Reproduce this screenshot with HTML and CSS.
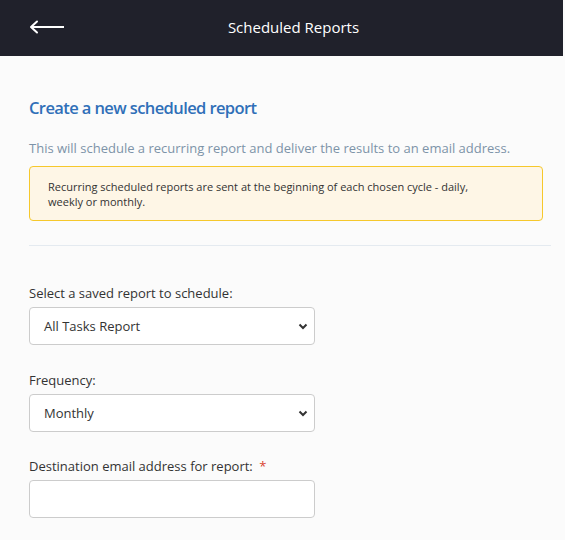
FILE: index.html
```html
<!DOCTYPE html>
<html>
<head>
<meta charset="utf-8">
<link rel="stylesheet" href="styles.css">
</head>
<body>
<div class="app">
  <header class="topbar">
    <a class="back" aria-label="Back">
      <svg width="36" height="14" viewBox="0 0 36 14"><path d="M8 1.5 L2 7 L8 12.5" fill="none" stroke="#fff" stroke-width="2" stroke-linecap="round" stroke-linejoin="round"/><path d="M2.5 7 H35" stroke="#fff" stroke-width="2"/></svg>
    </a>
    <h1 class="topbar-title">Scheduled Reports</h1>
  </header>
  <main class="content">
    <h2 class="heading">Create a new scheduled report</h2>
    <p class="intro">This will schedule a recurring report and deliver the results to an email address.</p>
    <div class="alert">Recurring scheduled reports are sent at the beginning of each chosen cycle - daily, weekly or monthly.</div>
    <hr class="divider">
    <div class="field field-first">
      <label class="label">Select a saved report to schedule:</label>
      <div class="select">All Tasks Report<svg class="chev" width="10" height="7" viewBox="0 0 10 7"><path d="M1.5 1.5 L5 5 L8.5 1.5" fill="none" stroke="#333" stroke-width="2"/></svg></div>
    </div>
    <div class="field">
      <label class="label">Frequency:</label>
      <div class="select">Monthly<svg class="chev" width="10" height="7" viewBox="0 0 10 7"><path d="M1.5 1.5 L5 5 L8.5 1.5" fill="none" stroke="#333" stroke-width="2"/></svg></div>
    </div>
    <div class="field field-last">
      <label class="label">Destination email address for report: <span class="req">*</span></label>
      <div class="input"></div>
    </div>
  </main>
</div>
</body>
</html>
```
FILE: styles.css
```css
* { box-sizing: border-box; }
html, body { margin: 0; padding: 0; }
body {
  background: #fbfbfb;
  font-family: "Open Sans", "Noto Sans", sans-serif;
  color: #333;
}
.app { width: 563px; }
.topbar {
  height: 56px;
  background: #20212b;
  display: flex;
  align-items: center;
  position: relative;
}
.back {
  display: flex;
  margin-left: 29px;
  margin-top: -2px;
}
.topbar-title {
  position: absolute;
  left: 0; right: 0;
  text-align: center;
  margin: 0;
  font-size: 15px;
  font-weight: 400;
  color: #fff;
  top: 17px;
  line-height: 20px;
  padding-left: 24px;
}
.content {
  padding: 0 12px 0 29px;
}
.heading {
  margin: 0;
  padding-top: 40px;
  font-size: 16.5px;
  font-weight: 600;
  color: #2f6fb8;
  line-height: 24px;
  letter-spacing: -0.6px;
}
.intro {
  margin: 19px 0 0;
  font-size: 13px;
  line-height: 18px;
  color: #7d93a8;
}
.alert {
  margin: 9px 8px 0 0;
  background: #fef6e6;
  border: 1px solid #f6c82c;
  border-radius: 4px;
  padding: 12px 60px 11px 18px;
  font-size: 11px;
  line-height: 15px;
  color: #333;
}
.divider {
  margin: 24px 0 0;
  border: 0;
  border-top: 1px solid #e4eaf0;
}
.field { margin-top: 26px; }
.field-first { margin-top: 38px; }
.field-last { margin-top: 25px; }
.label {
  display: block;
  font-size: 13px;
  line-height: 18px;
  color: #333;
  margin-bottom: 5px;
}
.req { color: #d9432f; margin-left: 3px; }
.select, .input {
  width: 286px;
  height: 38px;
  background: #fff;
  border: 1px solid #ccc;
  border-radius: 4px;
}
.select {
  display: flex;
  align-items: center;
  justify-content: space-between;
  padding: 0 6px 0 14px;
  font-size: 13px;
  color: #333;
}
.chev { margin-top: 1px; }
```
